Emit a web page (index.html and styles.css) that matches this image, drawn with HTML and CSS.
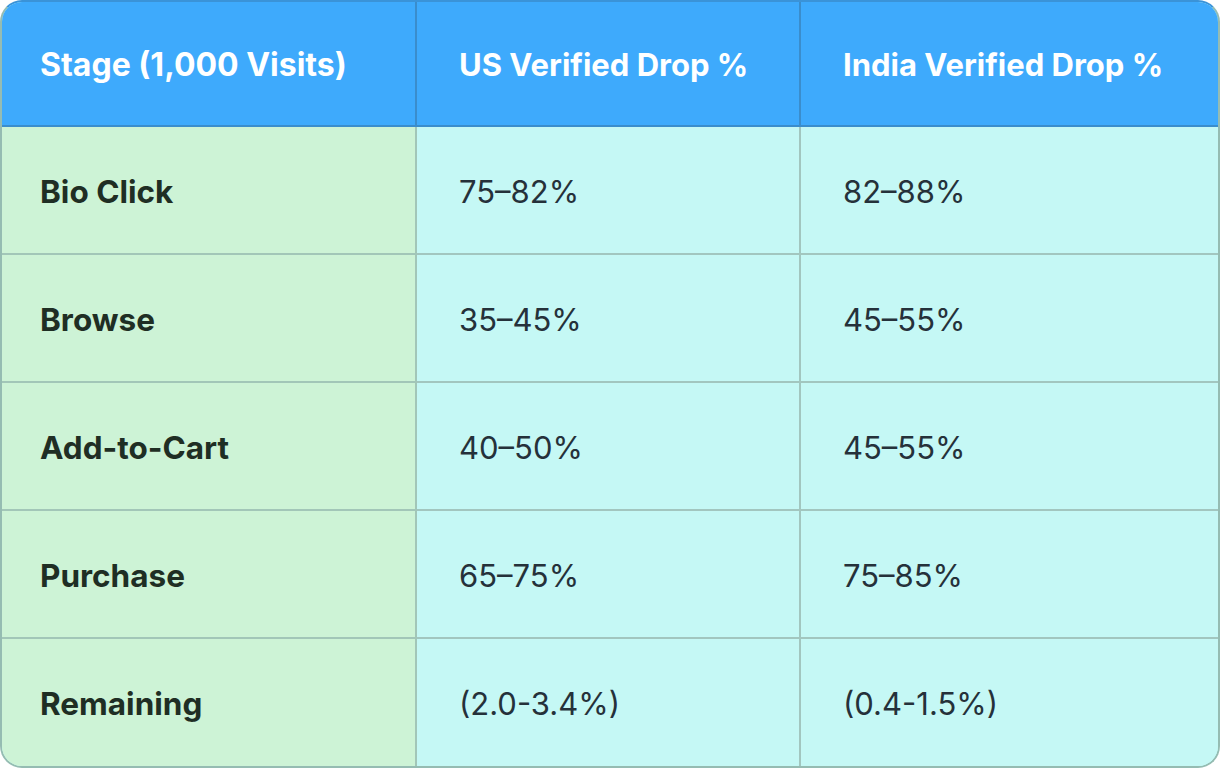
FILE: index.html
```html
<!DOCTYPE html>
<html lang="en">
<head>
<meta charset="utf-8">
<title>Funnel drop-off</title>
<link rel="stylesheet" href="styles.css">
</head>
<body>
<div class="card">
  <table class="funnel">
    <thead>
      <tr>
        <th class="c1">Stage (1,000 Visits)</th>
        <th class="c2">US Verified Drop %</th>
        <th class="c3">India Verified Drop %</th>
      </tr>
    </thead>
    <tbody>
      <tr><th class="c1">Bio Click</th><td class="c2">75–82%</td><td class="c3">82–88%</td></tr>
      <tr><th class="c1">Browse</th><td class="c2">35–45%</td><td class="c3">45–55%</td></tr>
      <tr><th class="c1">Add-to-Cart</th><td class="c2">40–50%</td><td class="c3">45–55%</td></tr>
      <tr><th class="c1">Purchase</th><td class="c2">65–75%</td><td class="c3">75–85%</td></tr>
      <tr><th class="c1">Remaining</th><td class="c2">(2.0-3.4%)</td><td class="c3">(0.4-1.5%)</td></tr>
    </tbody>
  </table>
</div>
</body>
</html>
```
FILE: styles.css
```css
html, body {
  margin: 0;
  padding: 0;
  background: #ffffff;
}
body {
  font-family: Inter, "Noto Sans", sans-serif;
}
.card {
  width: 1220px;
  height: 768px;
  box-sizing: border-box;
  border: 2px solid #95bcb2;
  border-top-color: #3a93d8;
  border-radius: 22px;
  overflow: hidden;
  background: #c5f8f5;
}
.funnel {
  width: 100%;
  height: 100%;
  border-collapse: separate;
  border-spacing: 0;
  table-layout: fixed;
}
.funnel .c1 { width: 415px; }
.funnel .c2 { width: 384px; }
.funnel th, .funnel td {
  box-sizing: border-box;
  text-align: left;
  vertical-align: middle;
  padding: 2px 0 0 42px;
  font-size: 31px;
}
.funnel .c1 { padding-left: 38px; }
.funnel thead th {
  height: 125px;
  background: #3eaafc;
  color: #ffffff;
  font-weight: 700;
  border-bottom: 2px solid #3a8dcc;
  border-right: 2px solid #3a8dcc;
}
.funnel thead th.c1 { font-size: 32px; }
.funnel thead th.c3 { border-right: none; }
.funnel tbody tr { height: 128px; }
.funnel tbody tr:last-child { height: 127px; }
.funnel tbody th {
  background: #cdf3d6;
  color: #1f2e24;
  font-weight: 700;
  font-size: 31.5px;
  border-right: 2px solid #a2c6b8;
  border-bottom: 2px solid #a2c6b8;
}
.funnel tbody td {
  background: #c5f8f5;
  color: #25313a;
  font-weight: 400;
  border-right: 2px solid #a2c6bf;
  border-bottom: 2px solid #a2c6bf;
}
.funnel tbody td.c3 { border-right: none; }
.funnel tbody tr:last-child th,
.funnel tbody tr:last-child td { border-bottom: none; }
```
